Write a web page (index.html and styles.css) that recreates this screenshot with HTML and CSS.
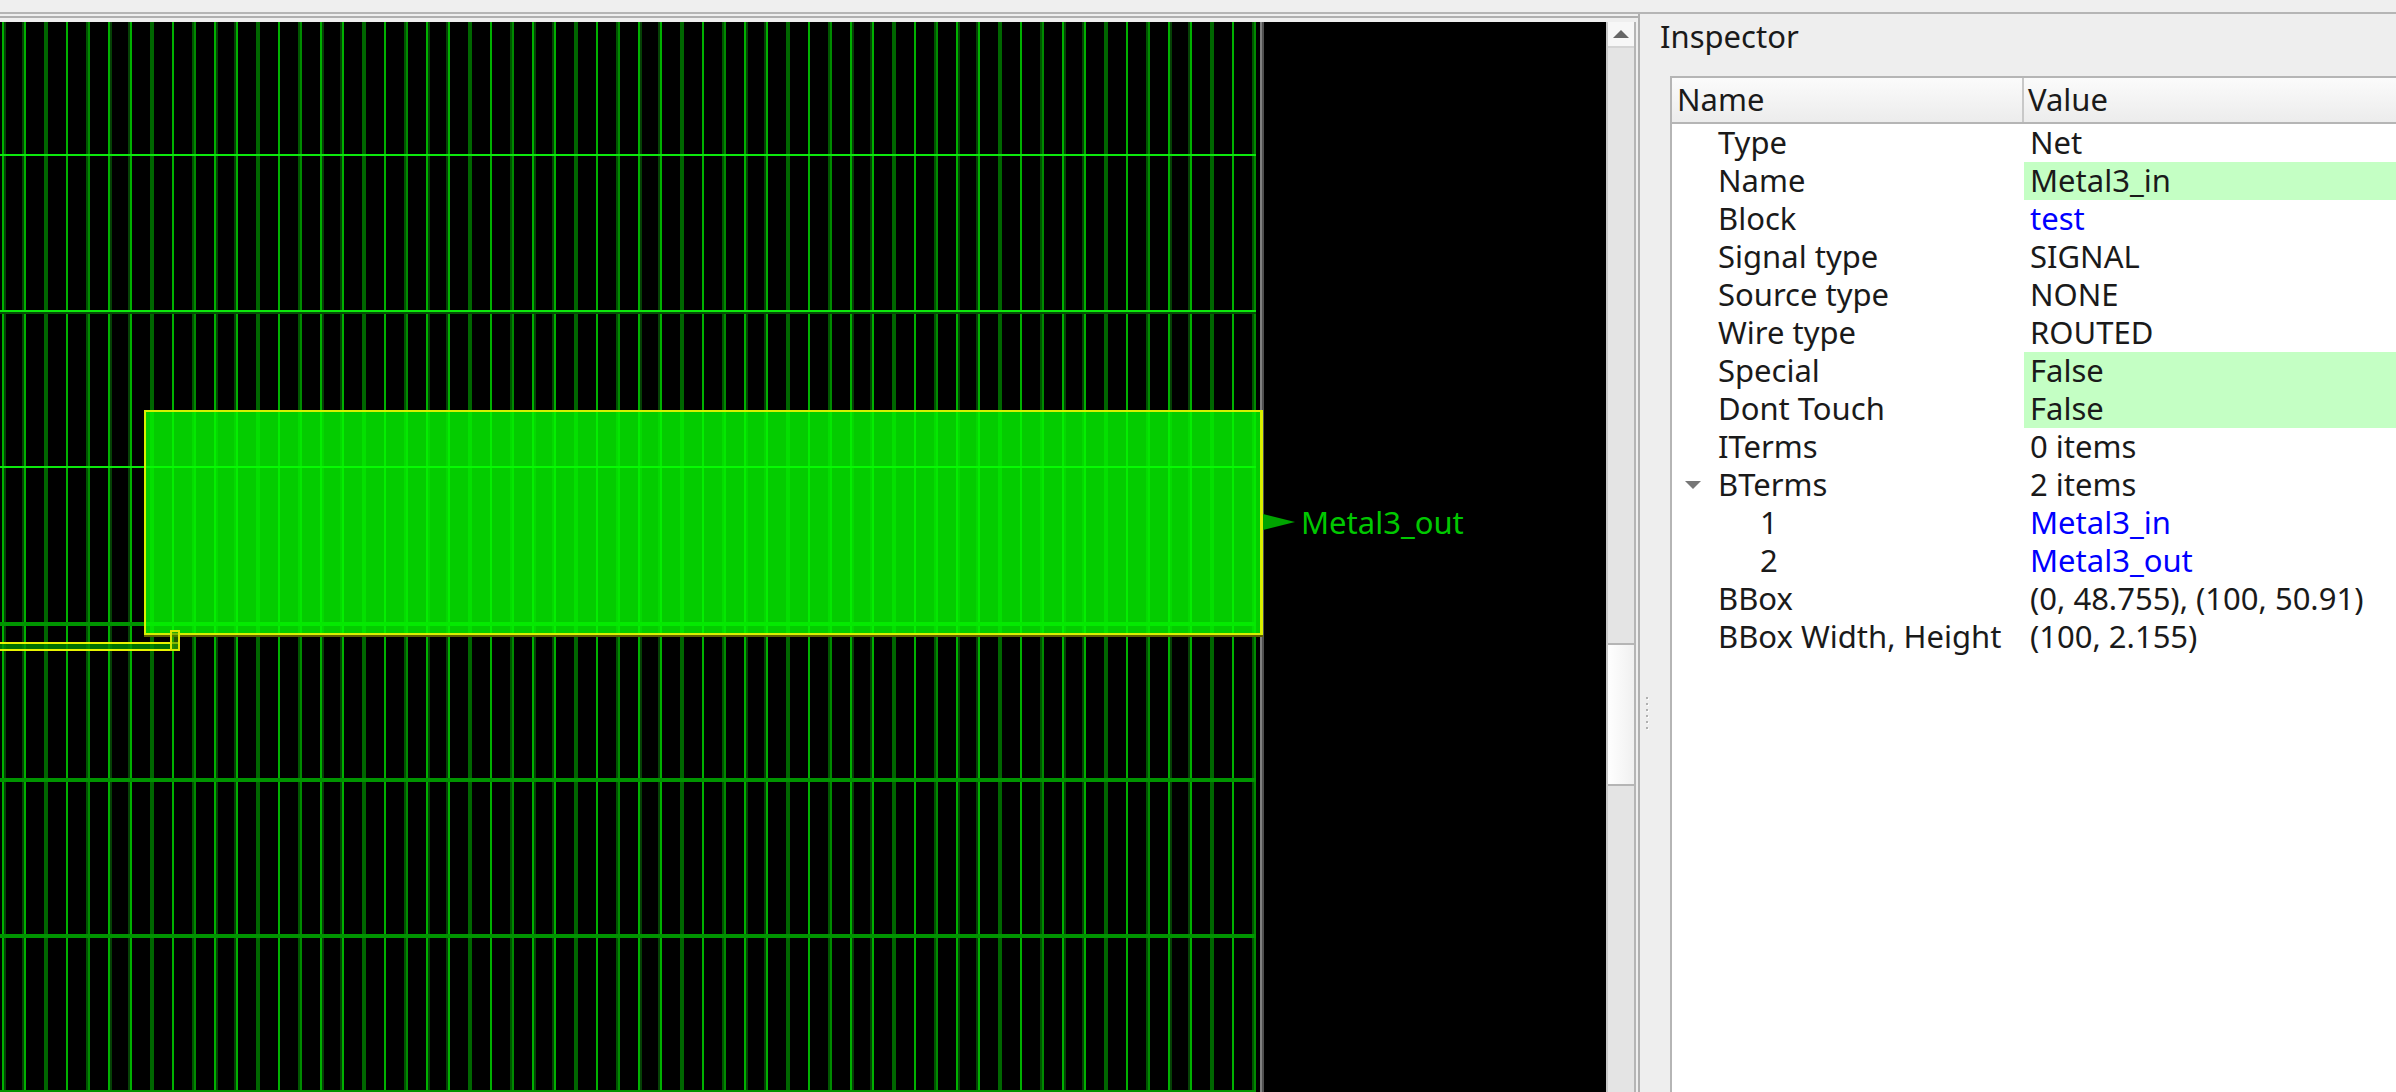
FILE: index.html
```html
<!DOCTYPE html>
<html>

<head>
    <link rel="stylesheet" href="styles.css">
</head>

<body>
    <div class="topbar"></div>
    <div class="main">
        <div class="left">
            <div class="frame">
                <div class="view">
                    <div class="grid"></div>
                    <div class="edge"></div>
                    <div class="net-rect"></div>
                    <div class="net-stripe"></div>
                    <div class="net-via"></div>
                    <svg class="pin" width="32" height="16" viewBox="0 0 32 16">
                        <polygon points="0,0 32,8 0,16" fill="#00a400"></polygon>
                    </svg>
                    <span class="pin-label">Metal3_out</span>
                </div>
                <div class="scrollbar">
                    <div class="scroll-up"><span class="arrow-up"></span></div>
                    <div class="scroll-thumb"></div>
                </div>
            </div>
        </div>
        <div class="inspector">
            <div class="title">Inspector</div>
            <div class="inspector-body">
                <div class="splitter">
                    <span class="dot"></span>
                    <span class="dot"></span>
                    <span class="dot"></span>
                    <span class="dot"></span>
                    <span class="dot"></span>
                    <span class="dot"></span>
                </div>
                <div class="tree">
                    <div class="tree-head">
                        <div class="head-name">Name</div>
                        <div class="head-value">Value</div>
                    </div>
                    <div class="row"><div class="cell-name">Type</div><div class="cell-value">Net</div></div>
                    <div class="row"><div class="cell-name">Name</div><div class="cell-value edit">Metal3_in</div></div>
                    <div class="row"><div class="cell-name">Block</div><div class="cell-value link">test</div></div>
                    <div class="row"><div class="cell-name">Signal type</div><div class="cell-value">SIGNAL</div></div>
                    <div class="row"><div class="cell-name">Source type</div><div class="cell-value">NONE</div></div>
                    <div class="row"><div class="cell-name">Wire type</div><div class="cell-value">ROUTED</div></div>
                    <div class="row"><div class="cell-name">Special</div><div class="cell-value edit">False</div></div>
                    <div class="row"><div class="cell-name">Dont Touch</div><div class="cell-value edit">False</div></div>
                    <div class="row"><div class="cell-name">ITerms</div><div class="cell-value">0 items</div></div>
                    <div class="row"><div class="cell-name"><span class="arrow-down"></span>BTerms</div><div class="cell-value">2 items</div></div>
                    <div class="row"><div class="cell-name child">1</div><div class="cell-value link">Metal3_in</div></div>
                    <div class="row"><div class="cell-name child">2</div><div class="cell-value link">Metal3_out</div></div>
                    <div class="row"><div class="cell-name">BBox</div><div class="cell-value">(0, 48.755), (100, 50.91)</div></div>
                    <div class="row"><div class="cell-name">BBox Width, Height</div><div class="cell-value">(100, 2.155)</div></div>
                </div>
            </div>
        </div>
    </div>
</body>

</html>
```

FILE: styles.css
```css
body {
    margin: 0;
    height: 1092px;
    overflow: hidden;
    background-color: #efefef;
    font-family: "Noto Sans", sans-serif;
    font-size: 31px;
    color: #1a1a1a;
}

.topbar {
    height: 12px;
}

.main {
    display: flex;
    height: 1078px;
    border-top: 2px solid #b5b5b5;
}

.left {
    width: 1638px;
    padding-top: 2px;
    border-right: 2px solid #b0b0b0;
    box-sizing: content-box;
}

.frame {
    display: flex;
    height: 1072px;
    border-top: 2px solid #b0b0b0;
    padding-top: 2px;
    box-shadow: inset 0 2px 0 #efefef;
}

/* layout view */
.view {
    position: relative;
    display: flex;
    flex: 0 0 1606px;
    margin-top: 2px;
    background-color: #000;
    overflow: hidden;
}

.grid {
    flex: 0 0 1256px;
    background-image:
        linear-gradient(to bottom,
            transparent 132px, #0ce80c 132px 134px,
            transparent 134px 288px, #0ce80c 288px 290px, #064e06 290px 292px,
            transparent 292px 444px, #0ce80c 444px 446px,
            transparent 446px 600px, #009400 600px 604px,
            transparent 604px 756px, #009400 756px 760px,
            transparent 760px 912px, #009400 912px 916px,
            transparent 916px 1068px, #009400 1068px 1070px, transparent 1070px),
        linear-gradient(to right,
            #00b000 0 2px, #064006 2px 4px,
            transparent 4px 20px, #064006 20px 22px, #00b000 22px 24px,
            transparent 24px 42px, #006600 42px 46px,
            transparent 46px 64px, #00b000 64px 66px,
            transparent 66px 84px, #005500 84px 86px, #008a00 86px 88px,
            transparent 88px 106px);
    background-size: 100% 100%, 106px 100%;
    background-position: 0 0, 2px 0;
}

.edge {
    width: 2px;
    margin-left: 4px;
    border-left: 2px solid #808080;
    background-color: #505050;
}

.net-rect {
    position: absolute;
    left: 144px;
    top: 388px;
    width: 1114px;
    height: 221px;
    border: 2px solid #d8f000;
    border-right-width: 3px;
    background-color: rgba(5, 255, 0, 0.8);
    box-shadow: 0 2px 0 #606000;
}

.net-stripe {
    position: absolute;
    left: 0;
    top: 620px;
    width: 178px;
    height: 5px;
    border: 2px solid #e8f400;
    border-left: none;
    background-color: rgba(0, 140, 0, 0.8);
}

.net-via {
    position: absolute;
    left: 170px;
    top: 608px;
    width: 6px;
    height: 17px;
    border: 2px solid #d8e800;
    background-color: rgba(60, 140, 0, 0.6);
}

.pin {
    position: absolute;
    left: 1263px;
    top: 492px;
}

.pin-label {
    position: absolute;
    left: 1301px;
    top: 481px;
    line-height: 38px;
    color: #00c800;
}

/* scrollbar */
.scrollbar {
    width: 26px;
    margin-top: 2px;
    border-left: 2px solid #c8c8c8;
    border-right: 2px solid #b5b5b5;
    background-color: #e4e4e4;
}

.scroll-up {
    display: flex;
    align-items: center;
    justify-content: center;
    height: 24px;
    border-bottom: 2px solid #d4d4d4;
    background-color: #f7f7f7;
}

.arrow-up {
    border-left: 8px solid transparent;
    border-right: 8px solid transparent;
    border-bottom: 8px solid #666;
}

.scroll-thumb {
    height: 139px;
    margin-top: 595px;
    border-top: 2px solid #b5b5b5;
    border-bottom: 2px solid #b5b5b5;
    background-image: linear-gradient(to right, #fff, #f0f0f0);
}

/* inspector */
.inspector {
    display: flex;
    flex-direction: column;
    flex: 1;
    min-width: 0;
    background-color: #eee;
}

.title {
    height: 62px;
    line-height: 44px;
    padding-left: 20px;
}

.inspector-body {
    display: flex;
    flex: 1;
}

.splitter {
    display: flex;
    flex-direction: column;
    gap: 4px;
    width: 24px;
    padding: 621px 0 0 6px;
}

.dot {
    width: 2px;
    height: 2px;
    background-color: #b0b0b0;
    box-shadow: 1px 1px 0 #fbfbfb;
}

.tree {
    flex: 1;
    border-left: 2px solid #b5b5b5;
    border-top: 2px solid #b5b5b5;
    background-color: #fff;
}

.tree-head {
    display: flex;
    height: 44px;
    line-height: 42px;
    border-bottom: 2px solid #b5b5b5;
    background-image: linear-gradient(to bottom, #fbfbfb, #ececec);
}

.head-name {
    width: 345px;
    padding-left: 5px;
    border-right: 2px solid #c8c8c8;
}

.head-value {
    padding-left: 4px;
}

.row {
    display: flex;
    height: 38px;
    line-height: 36px;
}

.cell-name {
    position: relative;
    width: 306px;
    padding-left: 46px;
}

.cell-name.child {
    width: 264px;
    padding-left: 88px;
}

.cell-value {
    flex: 1;
    padding-left: 6px;
}

.edit {
    background-color: #c4ffc4;
}

.link {
    color: #0000ff;
}

.arrow-down {
    position: absolute;
    left: 13px;
    top: 15px;
    border-left: 8px solid transparent;
    border-right: 8px solid transparent;
    border-top: 8px solid #777;
}
```
